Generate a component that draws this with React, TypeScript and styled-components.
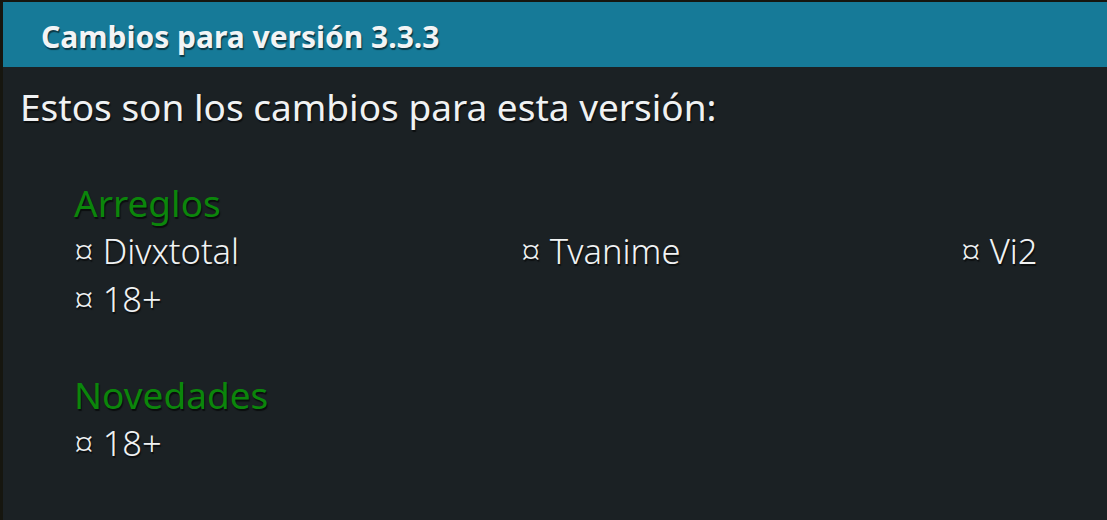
import styled, { createGlobalStyle } from "styled-components"

const GlobalStyle = createGlobalStyle`
body {
  margin: 0;
  background: #16160f;
  font-family: "Noto Sans", "Open Sans", sans-serif;
  overflow: hidden;
}
`

const Dialog = styled.div`
margin-left: 3px;
margin-top: 2px;
width: 1104px;
height: 518px;
background: #1b2124;
display: flex;
flex-direction: column;
`
const Header = styled.div`
height: 65px;
background: #167a98;
display: flex;
align-items: center;
padding-left: 38px;
`
const Title = styled.h1`
margin: 0;
padding-top: 3px;
font-size: 30px;
font-weight: 700;
color: #f2f4f5;
text-shadow: 1px 2px 1px rgba(0,0,0,0.55);
`
const Body = styled.div`
padding: 16px 0 0 17px;
color: #f0f2f3;
font-size: 37px;
line-height: 48px;
text-shadow: 1px 2px 1px rgba(0,0,0,0.6);
`
const Intro = styled.p`
margin: 0 0 48px 0;
`
const Section = styled.div`
padding-left: 54px;
margin-bottom: 48px;
`
const SectionTitle = styled.div`
color: #0b860b;
`
const ItemGrid = styled.div`
display: grid;
grid-template-columns: 447px 440px auto;
font-size: 34.5px;
font-weight: 300;
`
const Item = styled.div`
white-space: nowrap;
`

const sections = [
    { title: 'Arreglos', items: ['Divxtotal', 'Tvanime', 'Vi2', '18+'] },
    { title: 'Novedades', items: ['18+'] },
]

const App = () => {
    return (
        <>
            <GlobalStyle />
            <Dialog>
                <Header>
                    <Title>Cambios para versión 3.3.3</Title>
                </Header>
                <Body>
                    <Intro>Estos son los cambios para esta versión:</Intro>
                    {sections.map(s => (
                        <Section key={s.title}>
                            <SectionTitle>{s.title}</SectionTitle>
                            <ItemGrid>
                                {s.items.map((it, i) => (
                                    <Item key={i}>¤ {it}</Item>
                                ))}
                            </ItemGrid>
                        </Section>
                    ))}
                </Body>
            </Dialog>
        </>
    )
}
export default App
